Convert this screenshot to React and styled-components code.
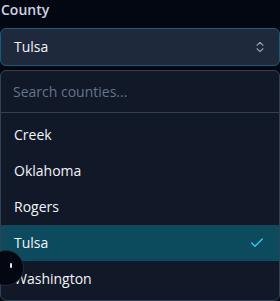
import React, { useState } from "react";
import styled, { createGlobalStyle } from "styled-components";

const GlobalStyle = createGlobalStyle`
  html, body {
    margin: 0;
    background: #030712;
    font-family: "Open Sans", "Noto Sans", sans-serif;
  }
`;

const Wrapper = styled.div`
  position: relative;
  width: 280px;
  height: 301px;
  overflow: hidden;
  display: flex;
  flex-direction: column;
`;

const Label = styled.div`
  font-size: 14px;
  font-weight: 600;
  color: #cbd5e1;
  line-height: 20px;
  padding: 0 1px;
  height: 28px;
`;

const Trigger = styled.button`
  display: flex;
  align-items: center;
  justify-content: space-between;
  width: 280px;
  height: 38px;
  box-sizing: border-box;
  padding: 0 12px 0 13px;
  background: #1e293b;
  border: 1px solid #155e75;
  border-radius: 6px;
  color: #f1f5f9;
  font-family: inherit;
  font-size: 14px;
`;

const Panel = styled.div`
  margin-top: 4px;
  box-sizing: border-box;
  width: 280px;
  background: #111827;
  border: 1px solid #334155;
  border-radius: 6px;
  overflow: hidden;
`;

const Search = styled.input`
  display: block;
  width: 100%;
  box-sizing: border-box;
  height: 42px;
  padding: 0 12px;
  background: transparent;
  border: none;
  border-bottom: 1px solid #334155;
  color: #e2e8f0;
  font-family: inherit;
  font-size: 14px;
  outline: none;

  &::placeholder {
    color: #64748b;
  }
`;

const List = styled.ul`
  list-style: none;
  margin: 0;
  padding: 4px 0;
`;

const Item = styled.li`
  display: flex;
  align-items: center;
  justify-content: space-between;
  height: 36px;
  padding: 0 14px 0 13px;
  font-size: 14px;
  color: #f1f5f9;
  background: ${(props) => (props.$active ? "#0c4a5e" : "transparent")};
`;

const Dot = styled.div`
  position: absolute;
  left: -12px;
  top: 250px;
  width: 36px;
  height: 36px;
  border-radius: 50%;
  background: #030712;
  border: 1px solid #262b33;
  box-sizing: border-box;

  &::after {
    content: "";
    position: absolute;
    left: 21px;
    top: 12px;
    width: 2px;
    height: 5px;
    border-radius: 1px;
    background: #e5e7eb;
  }
`;

const counties = ["Creek", "Oklahoma", "Rogers", "Tulsa", "Washington"];

const ChevronsIcon = () => (
  <svg width="14" height="14" viewBox="0 0 24 24" fill="none" stroke="#94a3b8" strokeWidth="2" strokeLinecap="round" strokeLinejoin="round">
    <path d="m7 15 5 5 5-5" />
    <path d="m7 9 5-5 5 5" />
  </svg>
);

const CheckIcon = () => (
  <svg width="16" height="16" viewBox="0 0 24 24" fill="none" stroke="#22d3ee" strokeWidth="2" strokeLinecap="round" strokeLinejoin="round">
    <path d="M20 6 9 17l-5-5" />
  </svg>
);

const App = () => {
  const [selected] = useState("Tulsa");

  return (
    <Wrapper>
      <GlobalStyle />
      <Label>County</Label>
      <Trigger>
        <span>{selected}</span>
        <ChevronsIcon />
      </Trigger>
      <Panel>
        <Search placeholder="Search counties..." />
        <List>
          {counties.map((c) => (
            <Item key={c} $active={c === selected}>
              {c}
              {c === selected && <CheckIcon />}
            </Item>
          ))}
        </List>
      </Panel>
      <Dot />
    </Wrapper>
  );
};

export default App;
